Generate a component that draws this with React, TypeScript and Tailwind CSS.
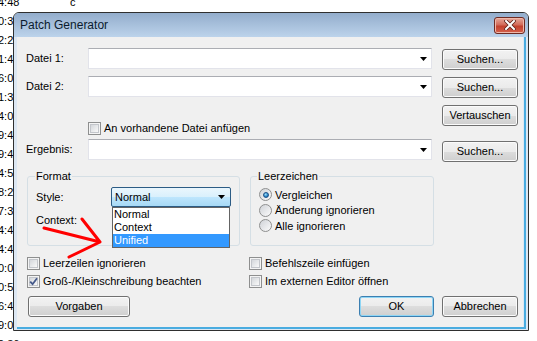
import React from "react";

const times = ["4:48","0:32","2:24","1:44","6:00","1:38","4:02","9:41","9:40","4:50","8:22","7:34","4:47","4:46","0:02","0:51","6:41","9:02","0:36"];

function Arrow() {
  return (
    <svg width="7" height="4" viewBox="0 0 7 4"><path d="M0 0H7L3.5 4Z" fill="#000" /></svg>
  );
}

function Combo() {
  return (
    <div className="flex h-[21px] w-[344px] items-center justify-end border border-[#e2e3ea] border-t-[#abadb3] bg-white pr-[4px]">
      <Arrow />
    </div>
  );
}

function Btn({ children, className = "", def = false }: { children: React.ReactNode; className?: string; def?: boolean }) {
  return (
    <div
      className={
        "flex h-[21px] items-center justify-center rounded-[3px] border bg-[linear-gradient(#f2f2f2,#ebebeb_50%,#dddddd_50%,#cfcfcf)] text-[11px] text-black " +
        (def ? "border-[#3c7fb1] shadow-[inset_0_0_0_1px_#8fd6f5] " : "border-[#707070] shadow-[inset_0_0_0_1px_#fbfbfb] ") +
        className
      }
    >
      {children}
    </div>
  );
}

function Check({ checked = false }: { checked?: boolean }) {
  return (
    <span className="flex h-[13px] w-[13px] shrink-0 border border-[#8e8f8f] bg-[#f4f4f4] p-[1px]">
      <span className="flex h-full w-full items-center justify-center border border-[#c3c6cb] bg-[linear-gradient(135deg,#d4d7db,#f9f9f9)]">
        {checked && (
          <svg width="9" height="9" viewBox="0 0 9 9" className="overflow-visible">
            <path d="M1.2 4.6 L3.6 7.2 L8 1.2" fill="none" stroke="#45598a" strokeWidth="1.8" />
          </svg>
        )}
      </span>
    </span>
  );
}

function Radio({ checked = false }: { checked?: boolean }) {
  return (
    <span className="flex h-[13px] w-[13px] shrink-0 items-center justify-center rounded-full border border-[#8e8f8f] bg-[linear-gradient(135deg,#cfd2d7,#fbfbfb)]">
      {checked && (
        <span className="h-[6px] w-[6px] rounded-full border border-[#1b4f86] bg-[radial-gradient(circle_at_40%_35%,#9ee0fb,#2a86c8_60%,#0d5a9c)]" />
      )}
    </span>
  );
}

export default function App() {
  return (
    <div className="relative h-[341px] w-[537px] overflow-hidden bg-white font-['Liberation_Sans',Arial,sans-serif] text-[11px] text-black">
      {/* background list */}
      <div className="-mt-[7px] flex flex-col">
        {times.map((t, i) => (
          <div key={i} className="flex h-[19px] items-center -ml-[2px] text-[11px] leading-[19px]">
            <span className="w-[72px]">{t}</span>
            {i === 0 && <span>c</span>}
          </div>
        ))}
      </div>

      {/* dialog window */}
      <div className="absolute left-[13px] top-[12px] flex h-[319px] w-[516px] flex-col rounded-t-[6px] border border-[#2f2f2f] bg-[#dce7f3]">
        {/* title bar */}
        <div className="flex h-[24px] items-center justify-between rounded-t-[5px] bg-[linear-gradient(#93adcc,#bcd3eb)] pl-[6px] pr-[3px]">
          <span className="text-[12px] text-[#0b1b2e]">Patch Generator</span>
          <div className="flex h-[17px] w-[31px] items-center justify-center rounded-[3px] border border-[#6e2a22] bg-[linear-gradient(#e6a99b,#d26b5a_45%,#c2412e_55%,#d5614c)] shadow-[inset_0_0_0_1px_#efb8aa]">
            <svg width="12" height="10" viewBox="0 0 12 10">
              <path d="M2 1 L10 9 M10 1 L2 9" stroke="#5b2019" strokeWidth="3.6" strokeLinecap="square" />
              <path d="M2 1 L10 9 M10 1 L2 9" stroke="#fff" strokeWidth="2" strokeLinecap="square" />
            </svg>
          </div>
        </div>

        {/* client wrapper */}
        <div className="flex flex-1 pl-[3px] pb-[1px] pr-[2px]">
          <div className="flex flex-1 border-b-2 border-r-2 border-[#49ace0]">
            <div className="flex h-[290px] w-[506px] flex-col bg-[#f0f0f0] pl-[9px] pr-[5px] pt-[11px]">
              {/* Datei 1 */}
              <div className="flex h-[22px] items-start">
                <span className="flex h-[21px] w-[62px] items-center">Datei 1:</span>
                <Combo />
                <Btn className="ml-[10px] mt-[1px] w-[76px]">Suchen...</Btn>
              </div>
              {/* Datei 2 */}
              <div className="mt-[6px] flex h-[22px] items-start">
                <span className="flex h-[21px] w-[62px] items-center">Datei 2:</span>
                <Combo />
                <Btn className="ml-[10px] mt-[1px] w-[76px]">Suchen...</Btn>
              </div>
              {/* checkbox + Vertauschen */}
              <div className="mt-[7px] flex items-start">
                <span className="w-[62px]" />
                <div className="mt-[17px] flex h-[13px] items-center gap-[3px]">
                  <Check />
                  <span>An vorhandene Datei anfügen</span>
                </div>
                <Btn className="ml-auto w-[76px]">Vertauschen</Btn>
              </div>
              {/* Ergebnis */}
              <div className="mt-[4px] flex h-[23px] items-start">
                <span className="flex h-[21px] w-[62px] items-center">Ergebnis:</span>
                <Combo />
                <Btn className="ml-[10px] mt-[2px] w-[76px]">Suchen...</Btn>
              </div>

              {/* groups */}
              <div className="mt-[8px] flex pl-[1px]">
                <fieldset className="m-0 h-[76px] w-[213px] rounded-[3px] border border-[#d5dfe5] p-0 pl-[8px]">
                  <legend className="ml-[-1px] px-[1px] leading-[13px]">Format</legend>
                  <div className="mt-[4px] flex items-center">
                    <span className="w-[75px]">Style:</span>
                    <div className="relative">
                      <div className="flex h-[20px] w-[120px] items-center justify-between rounded-[2px] border border-[#2c5c85] bg-[linear-gradient(#eaf6fd,#d9f0fc_50%,#bee6fd_50%,#a7d9f5)] pl-[3px] pr-[5px]">
                        <span>Normal</span>
                        <Arrow />
                      </div>
                      <div className="absolute left-[1px] top-full z-10 w-[118px] border border-[#646464] bg-white">
                        <div className="h-[13px] pl-[1px] leading-[13px]">Normal</div>
                        <div className="h-[13px] pl-[1px] leading-[13px]">Context</div>
                        <div className="h-[13px] bg-[#3399ff] pl-[1px] leading-[13px] text-white">Unified</div>
                      </div>
                    </div>
                  </div>
                  <div className="mt-[7px] leading-[13px]">Context:</div>
                </fieldset>
                <fieldset className="m-0 ml-[10px] h-[76px] w-[184px] rounded-[3px] border border-[#d5dfe5] p-0 pl-[8px]">
                  <legend className="ml-[-2px] px-[1px] leading-[13px]">Leerzeichen</legend>
                  <div className="mt-[4px] flex flex-col">
                    <div className="flex h-[15.5px] items-center gap-[3px]"><Radio checked /><span>Vergleichen</span></div>
                    <div className="flex h-[15.5px] items-center gap-[3px]"><Radio /><span>Änderung ignorieren</span></div>
                    <div className="flex h-[15.5px] items-center gap-[3px]"><Radio /><span>Alle ignorieren</span></div>
                  </div>
                </fieldset>
              </div>

              {/* checkboxes */}
              <div className="mt-[10px] grid grid-cols-[222px_1fr] gap-y-[4px] pl-[1px]">
                <div className="flex h-[14px] items-center gap-[3px]"><Check /><span>Leerzeilen ignorieren</span></div>
                <div className="flex h-[14px] items-center gap-[3px]"><Check /><span>Befehlszeile einfügen</span></div>
                <div className="flex h-[14px] items-center gap-[3px]"><Check checked /><span>Groß-/Kleinschreibung beachten</span></div>
                <div className="flex h-[14px] items-center gap-[3px]"><Check /><span>Im externen Editor öffnen</span></div>
              </div>

              {/* buttons */}
              <div className="mt-[8px] flex pl-[2px]">
                <Btn className="w-[102px]">Vorgaben</Btn>
                <Btn def className="ml-auto w-[75px]">OK</Btn>
                <Btn className="ml-[8px] w-[76px]">Abbrechen</Btn>
              </div>
            </div>
          </div>
        </div>
      </div>

      {/* red hand-drawn arrow */}
      <svg className="pointer-events-none absolute left-0 top-0" width="537" height="341" viewBox="0 0 537 341">
        <path d="M44 228 L100 242 M82 219 L100 242 L69 257" fill="none" stroke="#ff0000" strokeWidth="3" strokeLinecap="round" strokeLinejoin="round" />
      </svg>
    </div>
  );
}
